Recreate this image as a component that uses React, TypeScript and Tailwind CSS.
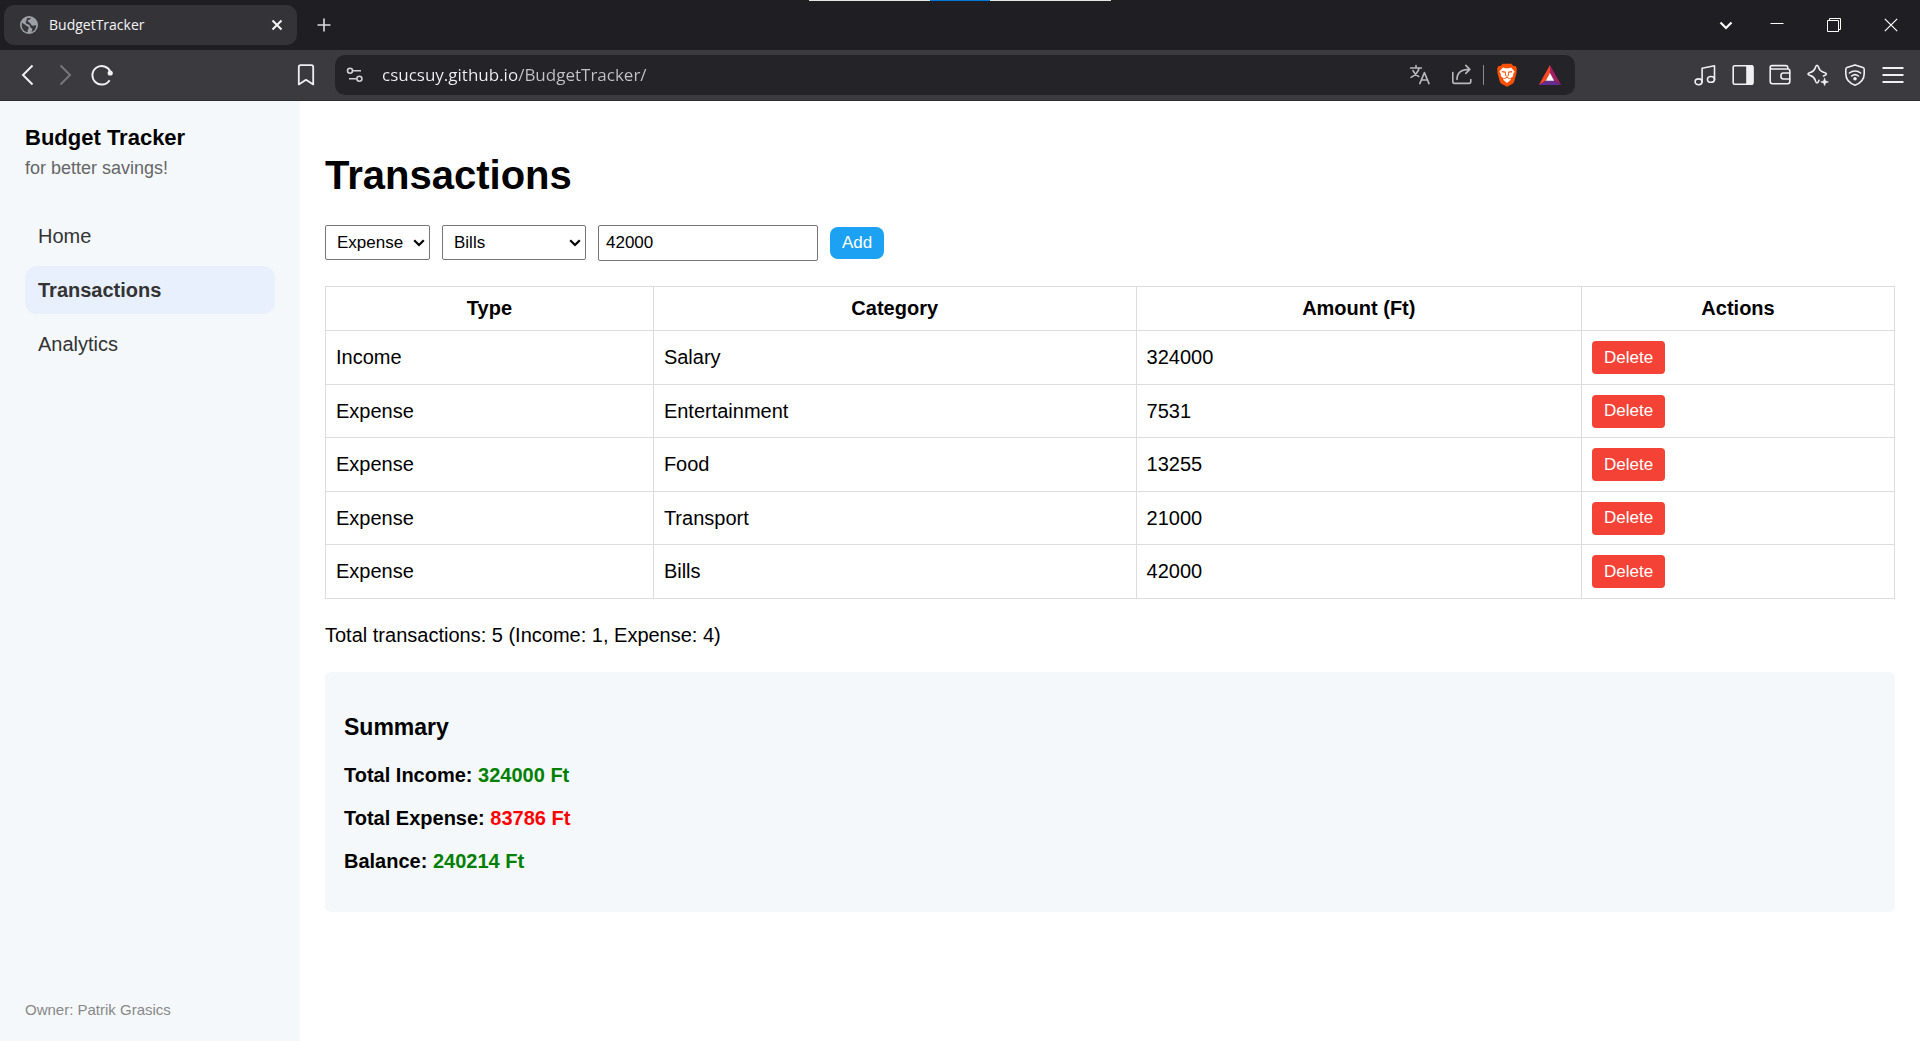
import { useState, type ReactNode } from 'react';

type Kind = 'Income' | 'Expense';

interface Transaction {
  id: number;
  type: Kind;
  category: string;
  amount: number;
}

const initial: Transaction[] = [
  { id: 1, type: 'Income', category: 'Salary', amount: 324000 },
  { id: 2, type: 'Expense', category: 'Entertainment', amount: 7531 },
  { id: 3, type: 'Expense', category: 'Food', amount: 13255 },
  { id: 4, type: 'Expense', category: 'Transport', amount: 21000 },
  { id: 5, type: 'Expense', category: 'Bills', amount: 42000 },
];

const categories: Record<Kind, string[]> = {
  Income: ['Salary', 'Other'],
  Expense: ['Bills', 'Food', 'Transport', 'Entertainment'],
};

function IconButton({ label, children, className = '' }: { label: string; children: ReactNode; className?: string }) {
  return (
    <button type="button" aria-label={label} className={`flex shrink-0 items-center justify-center ${className}`}>
      {children}
    </button>
  );
}

/* 22px stroked glyph used across the browser toolbar */
function Glyph({ children }: { children: ReactNode }) {
  return (
    <svg
      width="22"
      height="22"
      viewBox="0 0 22 22"
      fill="none"
      stroke="currentColor"
      strokeWidth="1.6"
      strokeLinecap="round"
      strokeLinejoin="round"
      aria-hidden="true"
    >
      {children}
    </svg>
  );
}

function TabStrip() {
  return (
    <div className="relative flex h-[50px] items-center justify-between bg-[#1f1e23] pr-px pl-1">
      <div className="absolute top-0 left-1/2 flex h-px w-[302px] -translate-x-1/2 bg-[#e3e5e3]">
        <span className="mx-auto w-[60px] bg-[#0078d7]" />
      </div>
      <div className="flex items-center">
        <div className="flex h-10 w-[293px] items-center rounded-[10px] bg-[#343338] pr-[14px] pl-4">
          <svg width="18" height="18" viewBox="0 0 18 18" aria-hidden="true">
            <circle cx="9" cy="9" r="9" fill="#9aa0a6" />
            <path
              d="M2 6.6 C3.4 8.6 5.4 8.2 6 9.6 C6.5 10.8 8.6 10.2 8.8 11.6 C9 12.8 7.6 13.2 7.8 14.4 C8 15.4 7.4 16 7 16.2 C3.8 15.4 1.8 12.6 1.7 9.2 Z M10.8 1.9 C10.8 3.8 8.2 3.2 7.8 4.6 C7.5 5.9 9.2 6.2 10.2 7.2 C11.4 8.4 11.2 9.6 12.8 9.8 C14.2 10 14.8 9 16.2 9.4 C16 13 14 15.4 11.4 16.1 C11.8 14.6 12.8 13.8 12 12.6 C11.2 11.6 10 11.6 10 10.2 C10 9 8.4 8.4 7 8 C5.6 7.6 5.4 5.6 6.4 4.4 C7 3.4 6.6 2.8 7.4 1.9 Z"
              fill="#37363b"
            />
          </svg>
          <span className="ml-[11px] flex-1 font-['Open_Sans',sans-serif] text-sm text-[#f4f4f6]">BudgetTracker</span>
          <IconButton label="Close tab">
            <svg width="12" height="12" viewBox="0 0 12 12" stroke="#f4f4f6" strokeWidth="2" aria-hidden="true">
              <path d="M1.5 1.5 L10.5 10.5 M10.5 1.5 L1.5 10.5" />
            </svg>
          </IconButton>
        </div>
        <IconButton label="New tab" className="ml-5 text-[#dcdce0]">
          <svg width="14" height="14" viewBox="0 0 14 14" stroke="currentColor" strokeWidth="1.6" aria-hidden="true">
            <path d="M7 0.5 V13.5 M0.5 7 H13.5" />
          </svg>
        </IconButton>
      </div>
      <div className="flex h-full text-white">
        <IconButton label="Search tabs" className="w-[46px]">
          <svg width="14" height="14" viewBox="0 0 14 14" fill="none" stroke="currentColor" strokeWidth="2.2" aria-hidden="true">
            <path d="M1.5 4.5 L7 10 L12.5 4.5" />
          </svg>
        </IconButton>
        <IconButton label="Minimize" className="w-[56px]">
          <svg width="14" height="14" viewBox="0 0 14 14" stroke="currentColor" aria-hidden="true">
            <path d="M0.5 5.5 H13.5" />
          </svg>
        </IconButton>
        <IconButton label="Restore" className="w-[58px]">
          <svg width="14" height="14" viewBox="0 0 14 14" fill="none" stroke="currentColor" aria-hidden="true">
            <path d="M0.5 2.5 H11.5 V13.5 H0.5 Z M2.5 2.5 V0.5 H13.5 V11.5 H11.5" />
          </svg>
        </IconButton>
        <IconButton label="Close window" className="w-[56px]">
          <svg width="14" height="14" viewBox="0 0 14 14" stroke="currentColor" strokeWidth="1.2" aria-hidden="true">
            <path d="M0.8 0.8 L13.2 13.2 M13.2 0.8 L0.8 13.2" />
          </svg>
        </IconButton>
      </div>
    </div>
  );
}

function Toolbar() {
  return (
    <div className="flex h-[51px] items-center border-b border-[#2f2b35] bg-[#3b3a3f] text-[#f0f0f3]">
      <div className="flex w-[335px] shrink-0 items-center justify-between pr-[18px] pl-4">
        <div className="flex gap-[15px]">
          <IconButton label="Back">
            <svg width="22" height="22" viewBox="0 0 22 22" fill="none" stroke="currentColor" strokeWidth="2" aria-hidden="true">
              <path d="M16.5 1.5 L7 11 L16.5 20.5" />
            </svg>
          </IconButton>
          <IconButton label="Forward" className="text-[#77767b]">
            <svg width="22" height="22" viewBox="0 0 22 22" fill="none" stroke="currentColor" strokeWidth="2" aria-hidden="true">
              <path d="M7.5 1.5 L17 11 L7.5 20.5" />
            </svg>
          </IconButton>
          <IconButton label="Reload">
            <svg width="24" height="22" viewBox="0 0 24 22" fill="none" stroke="currentColor" strokeWidth="2" aria-hidden="true">
              <path d="M19.6 16.2 A9.3 9.3 0 1 1 20.4 8" />
              <circle cx="20.2" cy="9" r="2.6" fill="currentColor" stroke="none" />
            </svg>
          </IconButton>
        </div>
        <IconButton label="Bookmark this tab">
          <svg width="22" height="22" viewBox="0 0 22 22" fill="none" stroke="currentColor" strokeWidth="1.8" strokeLinejoin="round" aria-hidden="true">
            <path d="M5.6 1.2 H16.4 Q18.2 1.2 18.2 3 V20.4 L11 15.8 L3.8 20.4 V3 Q3.8 1.2 5.6 1.2 Z" />
          </svg>
        </IconButton>
      </div>

      <div className="flex h-10 min-w-0 flex-1 items-center rounded-[10px] bg-[#242328] pr-[13px] pl-[11px]">
        <IconButton label="View site information" className="text-[#d2d2d6]">
          <svg width="18" height="18" viewBox="0 0 18 18" fill="none" stroke="currentColor" strokeWidth="1.6" aria-hidden="true">
            <circle cx="4" cy="4.8" r="2.5" />
            <path d="M6.8 4.8 H15 M3 12.8 H10.4" />
            <circle cx="13.4" cy="12.8" r="2.5" />
          </svg>
        </IconButton>
        <input
          type="text"
          aria-label="Address"
          defaultValue="csucsuy.github.io/BudgetTracker/"
          className="ml-[18px] min-w-0 flex-1 bg-[linear-gradient(90deg,#f2f2f5_135px,#c3c3c8_135px)] bg-clip-text font-['Open_Sans',sans-serif] text-[17px] text-transparent caret-white outline-none"
        />
        <IconButton label="Translate" className="text-[#b9b8be]">
          <Glyph>
            <path d="M1.6 4 H12.4 M7 1.6 V4 M10.2 4 C9.2 8 6 11.4 2 13.4 M4 6.6 C5.2 9.4 7.4 11.4 9.8 12.6" />
            <path d="M10.8 19.6 L15.4 8.6 L20 19.6 M12.4 16 H18.4" />
          </Glyph>
        </IconButton>
        <IconButton label="Share" className="ml-5 text-[#b9b8be]">
          <Glyph>
            <path d="M1.8 8.6 V17.6 Q1.8 19.4 3.6 19.4 H18 Q19.8 19.4 19.8 17.6 V15.6" />
            <path d="M6 15.4 C6 8.6 10 5.4 18.6 5.4 M14.8 1.4 L18.8 5.4 L14.8 9.4" />
          </Glyph>
        </IconButton>
        <span className="ml-[10px] h-5 w-px bg-[#8a898f]" />
        <IconButton label="Brave Shields" className="ml-3">
          <svg width="22" height="24" viewBox="0 0 22 24" aria-hidden="true">
            <path d="M6.6 0.8 H15.4 L17.4 2.9 L19.6 3 L21 6 L20.4 7.8 L20.8 9 L18.2 18.4 Q17.6 20 16.2 20.9 L11 23.8 L5.8 20.9 Q4.4 20 3.8 18.4 L1.2 9 L1.6 7.8 L1 6 L2.4 3 L4.6 2.9 Z" fill="#fb5005" />
            <path
              d="M7 4.6 L9 5.2 H13 L15 4.6 L18.6 8.4 L17 11.6 L17.4 13 L14.2 15.6 L14.8 16.8 L11 19.9 L7.2 16.8 L7.8 15.6 L4.6 13 L5 11.6 L3.4 8.4 Z"
              fill="#fff"
            />
            <path d="M5.8 8.6 L9 9.2 M16.2 8.6 L13 9.2" stroke="#fb5005" strokeWidth="1.3" />
            <path d="M9.6 8.6 L9.4 12.4 L11 13.4 L12.6 12.4 L12.4 8.6" fill="none" stroke="#fb5005" strokeWidth="0.9" />
            <path d="M8.2 15.6 L11 14.4 L13.8 15.6" fill="none" stroke="#fb5005" strokeWidth="1" />
          </svg>
        </IconButton>
        <IconButton label="Brave Rewards" className="ml-5">
          <svg width="24" height="22" viewBox="0 0 24 22" aria-hidden="true">
            <path d="M12 1 L0.8 21 L8.2 16.6 L12 9.6 Z" fill="#ff4724" />
            <path d="M12 1 L23.2 21 L15.8 16.6 L12 9.6 Z" fill="#9e1f63" />
            <path d="M0.8 21 H23.2 L15.8 16.6 H8.2 Z" fill="#662d91" />
            <path d="M12 9 L16.2 16.8 H7.8 Z" fill="#fff" />
          </svg>
        </IconButton>
      </div>

      <div className="flex w-[345px] shrink-0 justify-end pr-4">
        <div className="flex w-[210px] items-center justify-between">
          <IconButton label="Playlist">
            <Glyph>
              <ellipse cx="4.6" cy="17.8" rx="3.5" ry="2.9" />
              <ellipse cx="17" cy="15.4" rx="3.5" ry="2.9" />
              <path d="M8.1 17.8 V4.2 L20.5 1.8 V15.4" />
            </Glyph>
          </IconButton>
          <IconButton label="Side panel">
            <Glyph>
              <rect x="1.2" y="1.8" width="19.6" height="18.4" rx="1.4" />
              <path d="M15 1.8 H19.4 Q20.8 1.8 20.8 3.2 V18.8 Q20.8 20.2 19.4 20.2 H15 Z" fill="currentColor" />
            </Glyph>
          </IconButton>
          <IconButton label="Wallet">
            <Glyph>
              <path d="M18.8 5 V3.6 Q18.8 1.6 16.8 1.6 H3 Q1.2 1.6 1.2 3.4 V17.6 Q1.2 19.8 3.4 19.8 H18.6 Q20.8 19.8 20.8 17.6 V7 Q20.8 5 18.8 5 H3 Q1.2 5 1.2 3.4" />
              <path d="M20.8 9 H14.4 Q12 9 12 11.2 V12.8 Q12 15 14.4 15 H20.8" />
            </Glyph>
          </IconButton>
          <IconButton label="Leo assistant">
            <Glyph>
              <path d="M10 1.2 C11 1.2 11.2 2 11.6 3.4 C12.4 6.2 13 7 15.8 8 C18 8.8 19.4 8.8 19.4 10 C19.4 11 18.2 11.4 16.4 12 M10 1.2 C9 1.2 8.8 2 8.4 3.4 C7.4 6.4 6.4 7.4 3.4 8.4 C2 8.8 1 9 1 10 C1 11 2 11.2 3.4 11.6 C6.4 12.6 7.4 13.6 8.4 16.6 C8.8 18 9 19 10 19 C11 19 11.4 18 12 16.2" />
              <path d="M17.6 14.2 L18.6 16.9 L21.4 17.9 L18.6 18.9 L17.6 21.6 L16.6 18.9 L13.8 17.9 L16.6 16.9 Z" fill="currentColor" strokeWidth="0.6" />
            </Glyph>
          </IconButton>
          <IconButton label="VPN">
            <Glyph>
              <path d="M11 0.9 L19 3.6 Q20.2 4 20.2 5.4 V9.8 C20.2 15 17 19 11 21.2 C5 19 1.8 15 1.8 9.8 V5.4 Q1.8 4 3 3.6 Z" />
              <path d="M5.4 9 C8.6 6.4 13.4 6.4 16.6 9 M7.6 12 C9.6 10.4 12.4 10.4 14.4 12" />
              <circle cx="11" cy="14.8" r="1" fill="currentColor" />
            </Glyph>
          </IconButton>
          <IconButton label="Menu">
            <svg width="22" height="22" viewBox="0 0 22 22" stroke="currentColor" strokeWidth="2" aria-hidden="true">
              <path d="M0.5 4 H21.5 M0.5 11 H21.5 M0.5 18 H21.5" />
            </svg>
          </IconButton>
        </div>
      </div>
    </div>
  );
}

function Sidebar() {
  const links = ['Home', 'Transactions', 'Analytics'];
  return (
    <aside className="flex w-[300px] shrink-0 flex-col bg-[#f4f8fb] px-[25px] pt-6 pb-[22px]">
      <h2 className="text-[22px] leading-[26px] font-bold">Budget Tracker</h2>
      <p className="mt-[7px] text-lg leading-5 text-[#666666]">for better savings!</p>
      <nav className="mt-[34px] flex flex-col gap-[6px]">
        {links.map((name) => (
          <a
            key={name}
            href={`#${name.toLowerCase()}`}
            aria-current={name === 'Transactions' ? 'page' : undefined}
            className="flex h-12 items-center rounded-xl px-[13px] text-xl leading-6 text-[#333333] aria-[current=page]:bg-[#e8effd] aria-[current=page]:font-bold"
          >
            {name}
          </a>
        ))}
      </nav>
      <p className="mt-auto text-[15px] leading-[18px] text-[#888888]">Owner: Patrik Grasics</p>
    </aside>
  );
}

function Select({ label, value, options, onChange, className }: { label: string; value: string; options: string[]; onChange: (v: string) => void; className: string }) {
  return (
    <div className="relative self-start">
      <select
        aria-label={label}
        value={value}
        onChange={(e) => onChange(e.target.value)}
        className={`block h-[35px] appearance-none rounded-xs border border-[#767676] bg-white pl-[11px] text-[17px] leading-5 ${className}`}
      >
        {options.map((o) => (
          <option key={o}>{o}</option>
        ))}
      </select>
      <svg className="pointer-events-none absolute top-[14px] right-[5px]" width="12" height="8" viewBox="0 0 12 8" fill="none" stroke="#000" strokeWidth="2.2" aria-hidden="true">
        <path d="M1.2 1.2 L6 6 L10.8 1.2" />
      </svg>
    </div>
  );
}

export default function App() {
  const [items, setItems] = useState<Transaction[]>(initial);
  const [type, setType] = useState<Kind>('Expense');
  const [category, setCategory] = useState('Bills');
  const [amount, setAmount] = useState('42000');

  const sum = (kind: Kind) => items.filter((t) => t.type === kind).reduce((s, t) => s + t.amount, 0);
  const count = (kind: Kind) => items.filter((t) => t.type === kind).length;
  const income = sum('Income');
  const expense = sum('Expense');

  const add = () => {
    const value = Number(amount);
    if (value > 0) setItems([...items, { id: Date.now(), type, category, amount: value }]);
  };

  return (
    <div className="flex min-h-screen flex-col bg-white font-['Liberation_Sans',Arial,sans-serif] text-black">
      <header>
        <TabStrip />
        <Toolbar />
      </header>
      <div className="flex flex-1">
        <Sidebar />
        <main className="min-w-0 flex-1 px-[25px] pt-[51px] pb-[25px]">
          <h1 className="text-[40px] leading-[46px] font-bold">Transactions</h1>

          <form
            className="mt-[27px] flex h-9 items-center gap-3"
            onSubmit={(e) => {
              e.preventDefault();
              add();
            }}
          >
            <Select
              label="Type"
              value={type}
              options={['Income', 'Expense']}
              onChange={(v) => {
                setType(v as Kind);
                setCategory(categories[v as Kind][0]);
              }}
              className="w-[105px]"
            />
            <Select label="Category" value={category} options={categories[type]} onChange={setCategory} className="w-36" />
            <input
              type="text"
              inputMode="numeric"
              aria-label="Amount"
              value={amount}
              onChange={(e) => setAmount(e.target.value)}
              className="h-9 w-[220px] rounded-xs border border-[#767676] bg-white px-[7px] text-[17px] leading-5"
            />
            <button type="submit" className="h-8 rounded-lg bg-[#1da1f2] px-3 text-[17px] leading-5 text-white">
              Add
            </button>
          </form>

          <table className="mt-[25px] w-full border-collapse text-xl leading-[23px]">
            <thead>
              <tr className="h-11">
                {['Type', 'Category', 'Amount (Ft)', 'Actions'].map((h) => (
                  <th key={h} scope="col" className="border border-[#dddddd] px-[10px] text-center font-bold">
                    {h}
                  </th>
                ))}
              </tr>
            </thead>
            <tbody>
              {items.map((t) => (
                <tr key={t.id} className="odd:h-[54px] even:h-[53px]">
                  <td className="border border-[#dddddd] px-[10px]">{t.type}</td>
                  <td className="border border-[#dddddd] px-[10px]">{t.category}</td>
                  <td className="border border-[#dddddd] px-[10px]">{t.amount}</td>
                  <td className="border border-[#dddddd] px-[10px]">
                    <button
                      type="button"
                      onClick={() => setItems(items.filter((x) => x.id !== t.id))}
                      className="block h-[33px] rounded-[4px] bg-[#f44336] px-3 text-[17px] leading-5 text-white"
                    >
                      Delete
                    </button>
                  </td>
                </tr>
              ))}
            </tbody>
          </table>

          <p className="mt-[25px] text-xl leading-[23px]">
            Total transactions: {items.length} (Income: {count('Income')}, Expense: {count('Expense')})
          </p>

          <section className="mt-[25px] rounded-md bg-[#f4f8fb] px-[19px] pt-[42px] pb-[39px] font-bold">
            <h3 className="text-[23px] leading-[26px]">Summary</h3>
            <div className="mt-6 flex flex-col gap-5 text-xl leading-[23px]">
              <p>
                Total Income: <span className="text-[#008000]">{income} Ft</span>
              </p>
              <p>
                Total Expense: <span className="text-[#ff0000]">{expense} Ft</span>
              </p>
              <p>
                Balance: <span className="text-[#008000]">{income - expense} Ft</span>
              </p>
            </div>
          </section>
        </main>
      </div>
    </div>
  );
}
